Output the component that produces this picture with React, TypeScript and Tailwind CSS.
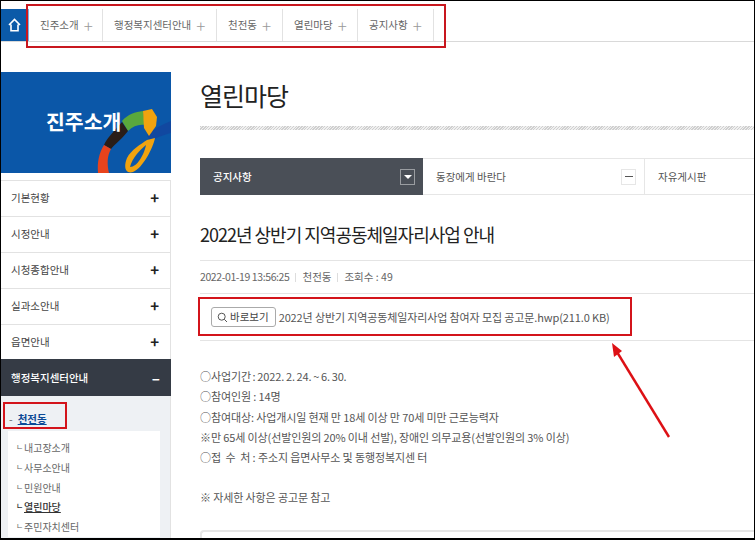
import React from 'react';

const FONT = { fontFamily: '"Noto Sans CJK KR", "Noto Sans", sans-serif' };

const crumbs = [
  { label: '진주소개', w: 'w-[74px]' },
  { label: '행정복지센터안내', w: 'w-[114px]' },
  { label: '천전동', w: 'w-[66px]' },
  { label: '열린마당', w: 'w-[75px]' },
  { label: '공지사항', w: 'w-[76px]' },
];
const menu = ['기본현황', '시정안내', '시청종합안내', '실과소안내', '읍면안내'];
const subMenu = ['내고장소개', '사무소안내', '민원안내', '열린마당', '주민자치센터'];
const bodyLines = [
  '○참여인원 : 14명',
  '○참여대상: 사업개시일 현재 만 18세 이상 만 70세 미만 근로능력자',
  '※만 65세 이상(선발인원의 20% 이내 선발), 장애인 의무교용(선발인원의 3% 이상)',
  '○접\u00a0 수\u00a0 처 : 주소지 읍면사무소 및 동행정복지센 터',
];

const Logo = () => (
  <svg className="absolute right-0 bottom-0" width="76" height="67" viewBox="0 0 76 67" fill="none">
    <path d="M52 29 C60 22 68 18 76 15 L76 27 C68 29 60 32 55 36 Z" fill="#1148a0" />
    <path d="M27 15 C33 8 40 6 48 5 L50 19 C44 18 38 20 33 25 Z" fill="#5aa83c" />
    <path d="M48 5 L57 3 L62 11 L61 20 L54 30 L49 22 Z" fill="#f0a30f" />
    <path d="M27 16 L33 25 C28 32 20 38 16 43 L9 39 C12 32 20 24 27 16 Z" fill="#2a1d17" />
    <path d="M9 39 L16 43 C12 50 12 58 14 67 L3 67 C2 56 4 47 9 39 Z" fill="#e8431c" />
    <path d="M52 34 L60 32 C58 42 48 62 38 66 C31 68 28 62 32 52 C36 44 46 38 52 34 Z" fill="#f0a30f" />
    <path d="M51 39 C45 44 37 52 35 61 C42 61 49 49 51 39 Z" fill="#0b57a8" />
  </svg>
);

export default function App() {
  return (
    <div className="relative h-[540px] w-[755px] overflow-hidden bg-white text-[#444]" style={FONT}>
      {/* top bar */}
      <div className="mt-[9px] flex h-[33px] items-stretch border-b border-[#d9d9d9]">
        <div className="flex w-[29px] items-center justify-center border-r border-[#7fb0e0] bg-[#0b5aa8]">
          <svg width="13" height="14" viewBox="0 0 13 14" fill="none" stroke="#fff" strokeWidth="1.6">
            <path d="M1 7 L6.5 1.5 L12 7 M3 6.5 V12.8 H10 V6.5" />
          </svg>
        </div>
        {crumbs.map(c => (
          <div key={c.label} className={`flex items-center gap-[5px] border-r border-[#e2e2e2] pl-[11px] text-[10.5px] text-[#666] ${c.w}`}>
            <span>{c.label}</span>
            <span className="text-[17px] leading-none font-light text-[#999]">+</span>
          </div>
        ))}
      </div>

      <div className="mt-[30px] flex">
        {/* left column */}
        <aside className="w-[171px] shrink-0">
          <div className="relative h-[101px] overflow-hidden bg-[#0b57a8]">
            <div className="relative z-10 pt-[39px] pl-[46px] text-[20.5px] leading-none font-bold text-white">진주소개</div>
            <Logo />
          </div>
          <div className="mt-[7px] border-t border-[#e2e2e2]">
            {menu.map(m => (
              <div key={m} className="flex h-9 items-center justify-between border-r border-b border-[#e2e2e2] px-[11px] pb-[2px] text-[10.5px] text-[#444]">
                <span>{m}</span>
                <span className="text-[15px] leading-none font-semibold text-[#222]">+</span>
              </div>
            ))}
            <div className="relative -mt-[2px] flex h-[37px] items-center justify-between bg-[#353b45] px-[11px] text-[10.5px] font-medium text-white">
              <span>행정복지센터안내</span>
              <span className="text-[15px] leading-none font-semibold">–</span>
            </div>
            <div className="h-[160px] border-r border-[#e2e2e2] bg-[#eef1f4] pt-[14px]">
              <div className="flex items-center gap-[5px] pl-[9px] text-[10.5px] leading-[18px] font-bold text-[#0b4a96]">
                <span className="font-normal text-[#666]">-</span>
                <span className="underline">천전동</span>
              </div>
              <ul className="mt-[3px] ml-[8px] w-[152px] bg-white pt-[7px] pl-[16px]">
                {subMenu.map(s => (
                  <li key={s} className={`relative h-[19.8px] text-[10px] leading-[19.8px] ${s === '열린마당' ? 'font-medium text-[#333] underline' : 'text-[#666]'}`}>
                    <span className="absolute top-[-1px] left-[-8px] text-[8px] no-underline">ㄴ</span>
                    {s}
                  </li>
                ))}
              </ul>
            </div>
          </div>
        </aside>

        {/* main column */}
        <main className="ml-[29px] w-[600px] shrink-0">
          <h1 className="text-[25px] leading-[46px] font-normal tracking-[-1px] text-[#222]">열린마당</h1>
          <div className="mt-[8px] h-[4px] bg-[repeating-linear-gradient(135deg,#cfcfcf_0,#cfcfcf_1px,#f0f0f0_1px,#f0f0f0_2px)]" />

          <div className="mt-[28px] flex h-[37px] border-y border-[#e6e6e6] text-[10.5px] text-[#555]">
            <div className="-my-px flex w-[223px] items-center justify-between bg-[#4a4f57] pr-[8px] pl-[13px] font-medium text-white">
              <span>공지사항</span>
              <span className="flex h-[16px] w-[15px] items-center justify-center border border-[#9a9da1] bg-[#4a4f57]">
                <span className="border-x-[4px] border-t-[4px] border-x-transparent border-t-white" />
              </span>
            </div>
            <div className="flex w-[222px] items-center justify-between border-r border-[#e6e6e6] pr-[8px] pl-[13px]">
              <span>동장에게 바란다</span>
              <span className="flex h-[16px] w-[15px] items-center justify-center border border-[#e6e6e6]">
                <span className="h-px w-[8px] bg-[#555]" />
              </span>
            </div>
            <div className="flex items-center pl-[13px]">자유게시판</div>
          </div>

          <h2 className="mt-[25px] text-[18px] leading-[28px] font-normal tracking-[-1px] text-[#222]">2022년 상반기 지역공동체일자리사업 안내</h2>
          <div className="mt-[12px] flex h-[34px] items-center border-y border-[#e4e4e4] text-[10.5px] text-[#666]">
            <span className="tracking-[-0.4px]">2022-01-19 13:56:25</span>
            <span className="mx-[6px] h-[9px] w-px bg-[#ddd]" />
            <span>천전동</span>
            <span className="mx-[6px] h-[9px] w-px bg-[#ddd]" />
            <span>조회수 : 49</span>
          </div>

          <div className="flex h-[47px] items-center border-b border-[#e4e4e4] pl-[11px] text-[11px] text-[#555]">
            <span className="flex h-[20px] items-center gap-[2px] rounded-[3px] border border-[#aaa] pr-[6px] pl-[5px] text-[10.5px] text-[#444]">
              <svg width="11" height="11" viewBox="0 0 11 11" fill="none" stroke="#555" strokeWidth="1">
                <circle cx="4.7" cy="4.7" r="3.5" />
                <path d="M7.3 7.3 L10 10" />
              </svg>
              바로보기
            </span>
            <span className="ml-[3px] tracking-[-0.12px]">2022년 상반기 지역공동체일자리사업 참여자 모집 공고문.hwp(211.0 KB)</span>
          </div>

          <div className="mt-[25px] text-[11px] leading-[20.3px] tracking-[-0.12px] text-[#555]">
            <p className="[word-spacing:-0.6px]">○사업기간 : 2022. 2. 24. ~ 6. 30.</p>
            {bodyLines.map(l => (
              <p key={l}>{l}</p>
            ))}
            <p className="mt-[20px]">※ 자세한 사항은 공고문 참고</p>
          </div>
          <div className="mt-[22px] h-4 rounded-tl-[4px] border-t-2 border-l-2 border-[#e6e6e6]" />
        </main>
      </div>

      {/* annotations */}
      <div className="absolute top-[4px] left-[26px] h-[44px] w-[420px] border-[2px] border-[#c8171e]" />
      <div className="absolute top-[402px] left-[3px] h-[27px] w-[64px] border-[2px] border-[#d3141b]" />
      <div className="absolute top-[297px] left-[198px] h-[39px] w-[434px] border-[2px] border-[#d3141b]" />
      <svg className="absolute top-[340px] left-[605px]" width="70" height="100" viewBox="0 0 70 100" fill="none">
        <path d="M64 97 L12 12" stroke="#dd1015" strokeWidth="2.4" />
        <path d="M7 3 L17 11 L9 17 Z" fill="#dd1015" />
      </svg>

      {/* screenshot frame */}
      <div className="pointer-events-none absolute inset-0 border-x border-t border-b-2 border-black" />
    </div>
  );
}
